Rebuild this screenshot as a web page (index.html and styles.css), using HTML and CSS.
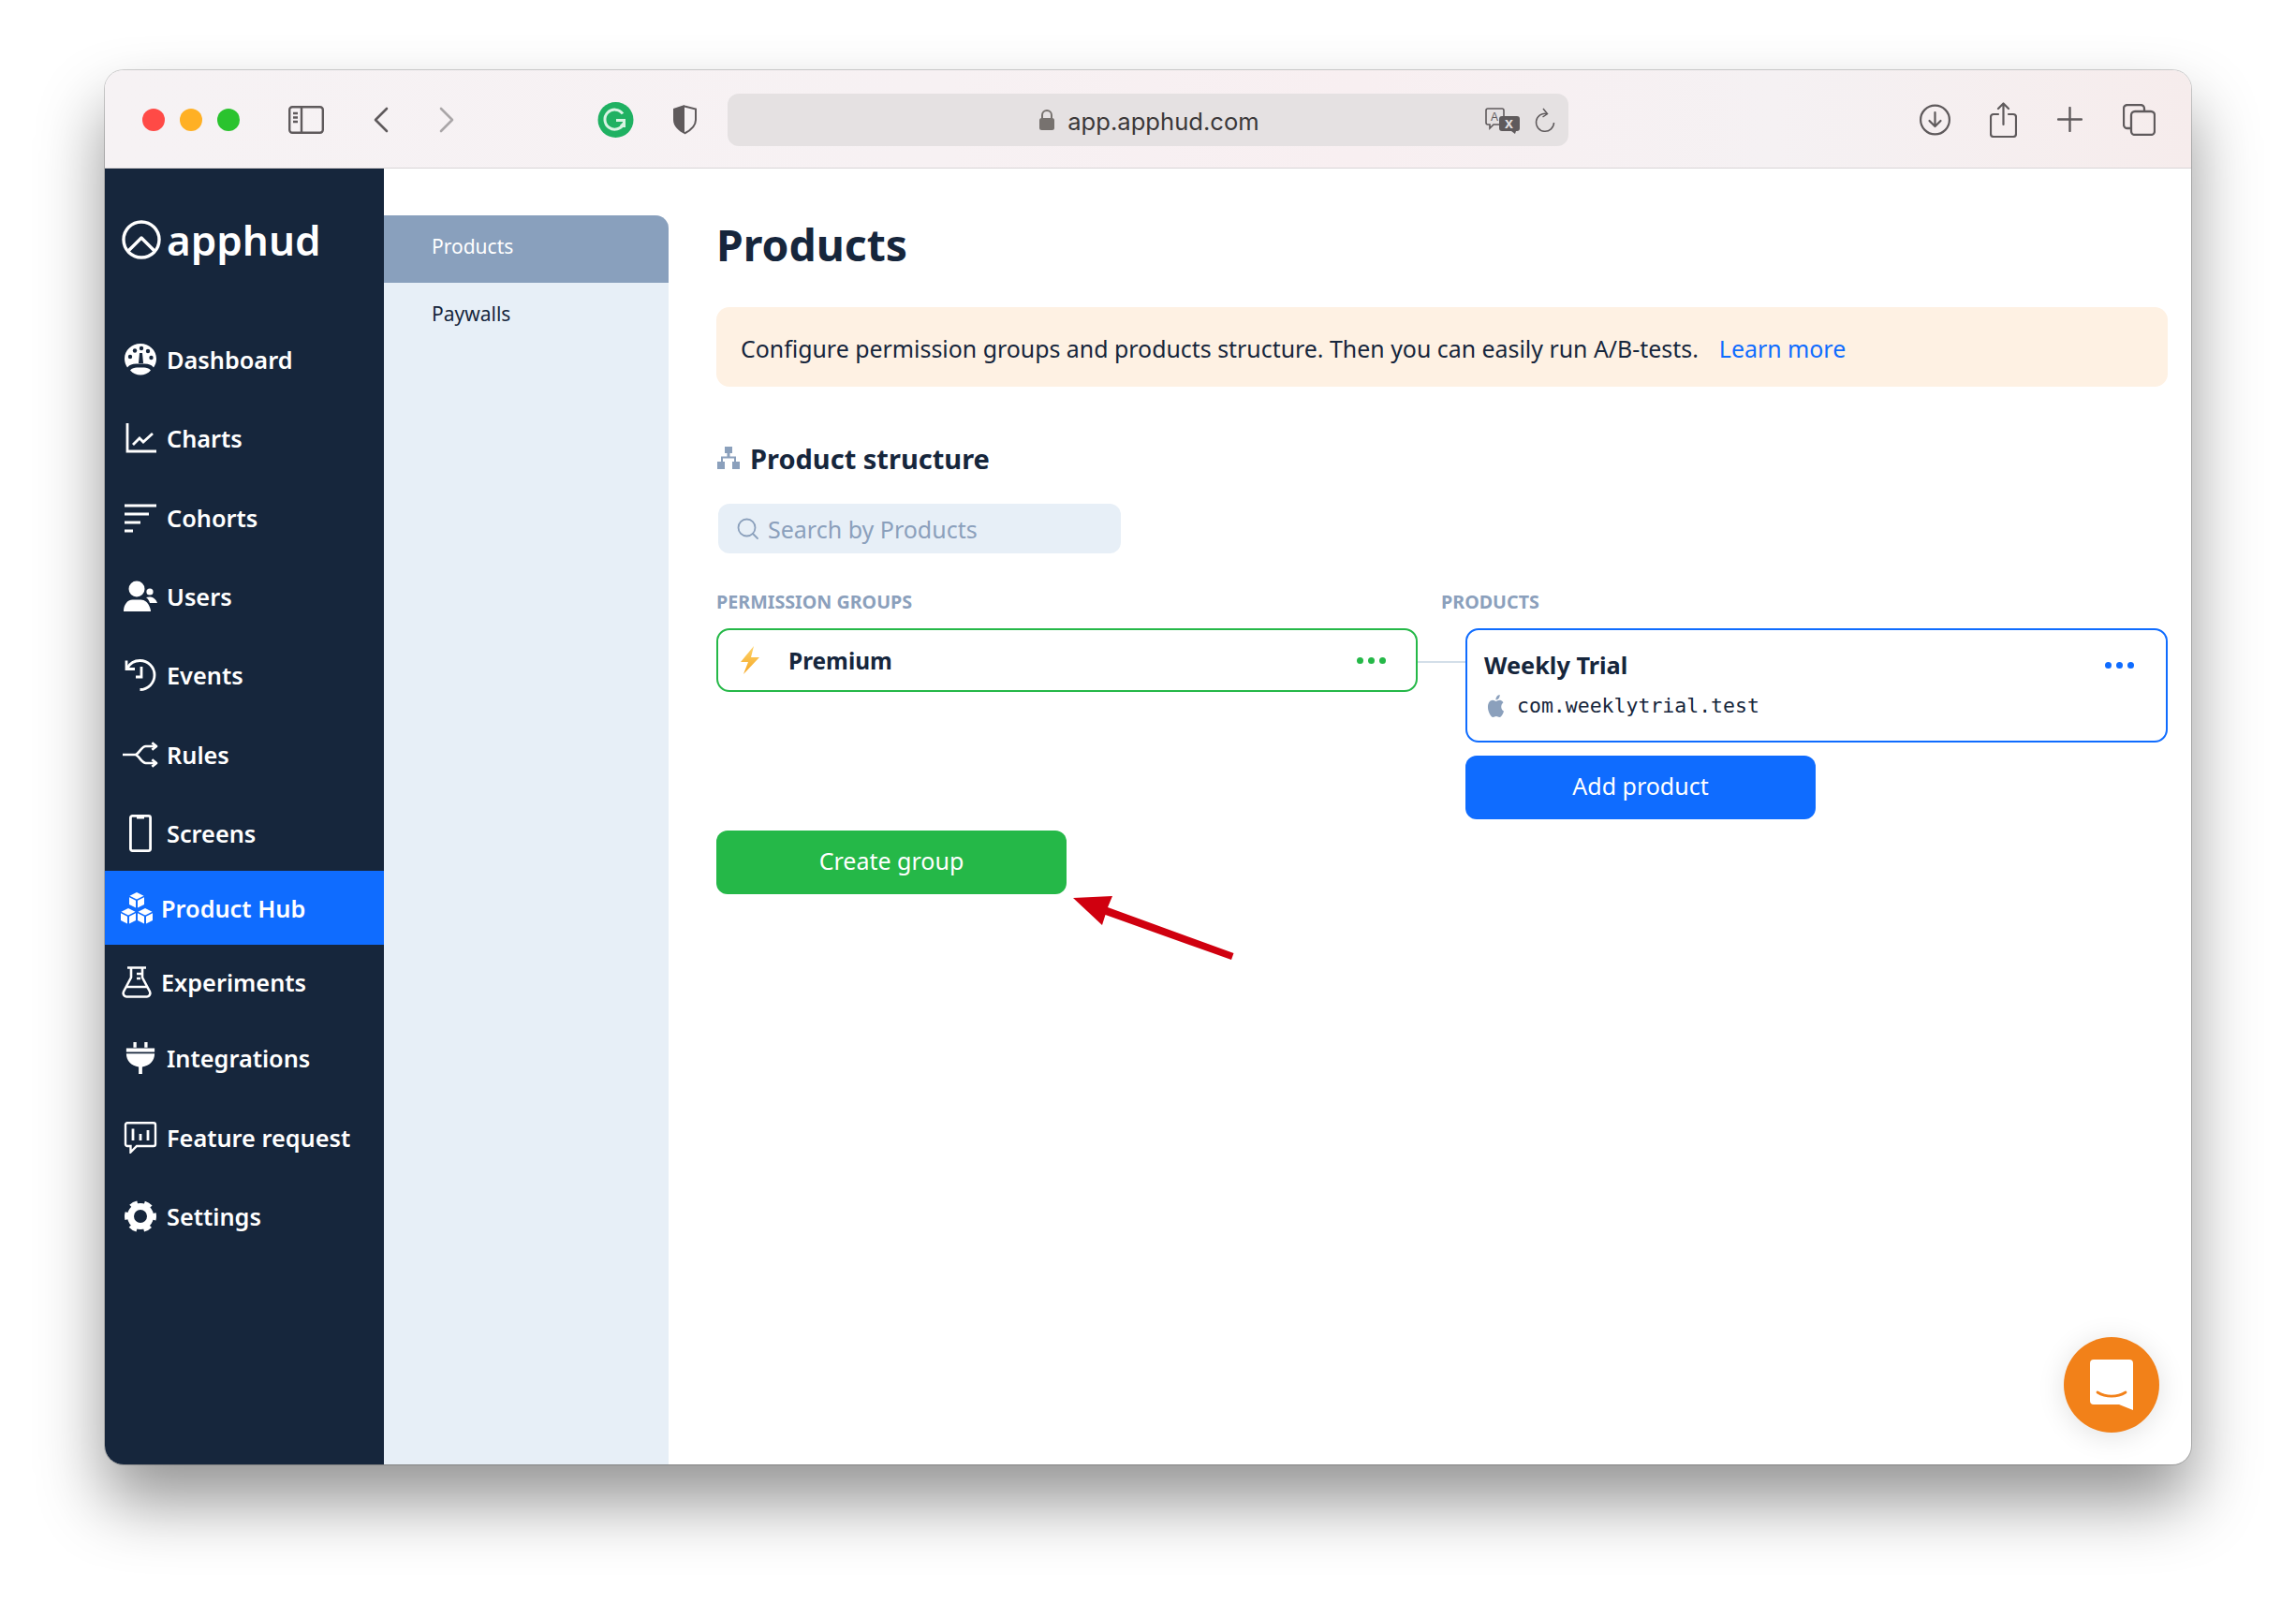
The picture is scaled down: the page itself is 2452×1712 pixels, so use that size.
FILE: index.html
```html
<!DOCTYPE html>
<html lang="en">
<head>
  <meta charset="UTF-8">
  <title>Products - Apphud</title>
  <link rel="stylesheet" href="styles.css">
</head>
<body>
  <div class="window">
    <div class="toolbar">
      <div class="lights">
        <span class="light red"></span>
        <span class="light orange"></span>
        <span class="light green"></span>
      </div>
      <svg class="tb-sidebar" width="38" height="30" viewBox="0 0 38 30" fill="none" stroke="#5f5a5c" stroke-width="2.4"><rect x="1.2" y="1.2" width="35.6" height="27.6" rx="3"/><path d="M14 1v28M5 8h5M5 12.500h5M5 17h5"/></svg>
      <svg class="tb-back" width="17" height="28" viewBox="0 0 17 28" fill="none" stroke="#5f5a5c" stroke-width="2.6" stroke-linecap="round" stroke-linejoin="round"><path d="M15 2 3 14l12 12"/></svg>
      <svg class="tb-forward" width="17" height="28" viewBox="0 0 17 28" fill="none" stroke="#aaa6a8" stroke-width="2.6" stroke-linecap="round" stroke-linejoin="round"><path d="m2 2 12 12L2 26"/></svg>
      <svg class="tb-grammarly" width="39" height="38" viewBox="0 0 39 38"><circle cx="19.500" cy="19" r="19" fill="#1fb162"/><path d="M27 12.500A10.500 10.500 0 1 0 28 23l-3 3M20 19.500h8.500V27" fill="none" stroke="#d8f3e3" stroke-width="3"/></svg>
      <svg class="tb-shield" width="28" height="33" viewBox="0 0 28 33"><path d="M14 1 2 5v12c0 7 6 12 12 15z" fill="#5f5a5c"/><path d="M14 2.500 26 5.500V17c0 6.500-6 11.500-12 14.500" fill="#f5f1f3" stroke="#5f5a5c" stroke-width="2"/></svg>
      <div class="url-bar">
        <svg width="18" height="24" viewBox="0 0 18 24"><path d="M4 11V7a5 5 0 0 1 10 0v4" fill="none" stroke="#77726f" stroke-width="2"/><rect x="1" y="10" width="16" height="13" rx="2.500" fill="#77726f"/></svg>
        <span class="url-text">app.apphud.com</span>
        <div class="url-icons">
          <svg width="37" height="28" viewBox="0 0 37 28">
            <path d="M3 1h15a2 2 0 0 1 2 2v13a2 2 0 0 1-2 2H9l-4 4v-4H3a2 2 0 0 1-2-2V3a2 2 0 0 1 2-2z" fill="none" stroke="#5f5a5c" stroke-width="1.600"/>
            <text x="6" y="14" class="tr-a">A</text>
            <path d="M18 9h16a3 3 0 0 1 3 3v10a3 3 0 0 1-3 3h-1l-1 3-4-3h-10a3 3 0 0 1-3-3V12a3 3 0 0 1 3-3z" fill="#5f5a5c"/>
            <text x="21" y="22" class="tr-x">x</text>
          </svg>
          <svg width="22" height="27" viewBox="0 0 22 27" fill="none" stroke="#5f5a5c" stroke-width="1.500"><path d="M13 6.500a9.500 9.500 0 1 0 7.500 9.500"/><path d="m9 1 4.500 5.500L8.500 10"/></svg>
        </div>
      </div>
      <svg class="tb-download" width="33" height="34" viewBox="0 0 33 34" fill="none" stroke="#5f5a5c" stroke-width="2.200" stroke-linecap="round" stroke-linejoin="round"><circle cx="16.500" cy="17" r="15.400"/><path d="M16.500 9v15M10.500 18l6 6 6-6"/></svg>
      <svg class="tb-share" width="29" height="38" viewBox="0 0 29 38" fill="none" stroke="#5f5a5c" stroke-width="2.200" stroke-linecap="round" stroke-linejoin="round"><path d="M9 13H4a3 3 0 0 0-3 3v18a3 3 0 0 0 3 3h21a3 3 0 0 0 3-3V16a3 3 0 0 0-3-3h-5M14.500 24V2M9 7l5.500-5.500L20 7"/></svg>
      <svg class="tb-plus" width="27" height="27" viewBox="0 0 27 27" fill="none" stroke="#5f5a5c" stroke-width="2.400" stroke-linecap="round"><path d="M13.500 1v25M1 13.500h25"/></svg>
      <svg class="tb-tabs" width="35" height="34" viewBox="0 0 35 34" fill="none" stroke="#5f5a5c" stroke-width="2.300"><path d="M8 26H5a4 4 0 0 1-4-4V5a4 4 0 0 1 4-4h14a4 4 0 0 1 4 4v3"/><rect x="9" y="8" width="25" height="25" rx="4"/></svg>
    </div>

    <div class="app">
      <aside class="sidebar">
        <div class="logo">
          <svg width="42" height="42" viewBox="0 0 42 42" fill="none" stroke="#fff" stroke-width="3.400" stroke-linejoin="round"><circle cx="21" cy="21" r="19"/><path d="M7 33 21 19l14 14"/></svg>
          <span class="logo-text">apphud</span>
        </div>
        <nav class="nav">
          <a class="nav-item">
            <svg class="nav-icon" viewBox="0 0 34 34">
              <path d="M17 0C7.600 0 0 7.200 0 16c0 3.400 1 6.800 3 9.400 2.500-2.800 5-3.900 9.500-3.900h9c4.500 0 7 1.100 9.500 3.900 2-2.600 3-6 3-9.400C34 7.200 26.400 0 17 0z" fill="#fff"/>
              <path d="M6 28.500c2-2.300 4.500-3 7-3h8c2.500 0 5 .7 7 3-2.800 3.200-7 5-11 5s-8.200-1.800-11-5z" fill="#fff"/>
              <g fill="#16263c"><circle cx="6" cy="14" r="2.200"/><circle cx="11" cy="7.500" r="2.200"/><circle cx="18" cy="5" r="2.200"/><circle cx="25" cy="8" r="2.200"/><circle cx="28.500" cy="15" r="2.200"/><path d="M16 10h3l1 11h-5z"/></g>
            </svg>
            <span>Dashboard</span>
          </a>
          <a class="nav-item">
            <svg class="nav-icon" viewBox="0 0 34 34" fill="none" stroke="#fff" stroke-width="2.800"><path d="M3 1v30h31"/><path d="m9 24 7-7 4 4 10-9"/></svg>
            <span>Charts</span>
          </a>
          <a class="nav-item">
            <svg class="nav-icon" viewBox="0 0 34 34" fill="none" stroke="#fff" stroke-width="3"><path d="M0 4h34M0 13h26M0 22h17M0 31h9"/></svg>
            <span>Cohorts</span>
          </a>
          <a class="nav-item">
            <svg class="nav-icon" viewBox="0 0 36 34" fill="#fff"><circle cx="14" cy="9" r="8.500"/><path d="M0 33c0-7 4-12.500 9.500-12.500h9c4 0 7.500 3 9 7 1 2 1.500 4 1.500 5.500z"/><circle cx="28" cy="12" r="3.600"/><path d="M24 18c4-1.500 10-.5 12 6h-8c-.5-2-2-4.500-4-6z"/></svg>
            <span>Users</span>
          </a>
          <a class="nav-item">
            <svg class="nav-icon" viewBox="0 0 34 34" fill="none" stroke="#fff" stroke-width="2.800"><path d="M3 9.500C6 4 11.500 1.500 16.500 1.500c8.500 0 15.500 7 15.500 15.500s-7 15.500-15.500 15.500"/><path d="M2 1.500v9h9"/><path d="M17 9v11h-6" transform="translate(1 -1)"/></svg>
            <span>Events</span>
          </a>
          <a class="nav-item">
            <svg class="nav-icon rules-icon" viewBox="0 0 40 28" fill="none" stroke="#fff" stroke-width="2.800" stroke-linejoin="round"><path d="M0 14h14c4 0 7-9.500 12-9.500h12M14 14c4 0 7 9.500 12 9.500h12"/><path d="m33 .5 5 4-5 4M33 19.500l5 4-5 4"/></svg>
            <span>Rules</span>
          </a>
          <a class="nav-item">
            <svg class="nav-icon screens-icon" viewBox="0 0 24 40" fill="none" stroke="#fff" stroke-width="2.800"><rect x="1.400" y="1.400" width="21.200" height="37.200" rx="2"/><path d="M8 3h8" stroke-width="3"/></svg>
            <span>Screens</span>
          </a>
          <a class="nav-item hub active">
            <svg class="nav-icon" viewBox="0 0 34 34" fill="#fff">
              <defs>
                <g id="cube"><path d="m8 0 7.500 3.700L8 7.400.5 3.700z"/><path d="M0 5.200v7.800l7 3.500V8.700z"/><path d="M16 5.200v7.800l-7 3.500V8.700z"/></g>
              </defs>
              <use href="#cube" x="9" y="0"/>
              <use href="#cube" x="0" y="17"/>
              <use href="#cube" x="18" y="17"/>
            </svg>
            <span>Product Hub</span>
          </a>
          <a class="nav-item lab">
            <svg class="nav-icon" viewBox="0 0 34 34" fill="none" stroke="#fff" stroke-width="2.600" stroke-linejoin="round"><path d="M7 1.500h20M11 1.500V12L3 27c-1.200 2.500.5 5.500 3 5.500h22c2.500 0 4.200-3 3-5.500L23 12V1.500"/><path d="M6 22h22M17 8h5M17 13h4"/></svg>
            <span>Experiments</span>
          </a>
          <a class="nav-item">
            <svg class="nav-icon" viewBox="0 0 34 36" fill="#fff"><path d="M9 0h3.500v6H9zM21.500 0H25v6h-3.500zM1 7h32v4H1zM1 13h32c0 8-5.500 14-14 15v8h-4v-8C6.500 27 1 21 1 13z"/></svg>
            <span>Integrations</span>
          </a>
          <a class="nav-item">
            <svg class="nav-icon" viewBox="0 0 34 34" fill="none" stroke="#fff" stroke-width="2.400"><path d="M3 1.200h28a2 2 0 0 1 2 2V24a2 2 0 0 1-2 2H13l-6.500 6.500V26H3a2 2 0 0 1-2-2V3.200a2 2 0 0 1 2-2z"/><path d="M9 7.500V20M17 13v7M25 9v11" stroke-width="2.800"/></svg>
            <span>Feature request</span>
          </a>
          <a class="nav-item">
            <svg class="nav-icon" viewBox="0 0 34 34" fill="none" stroke="#fff"><circle cx="17" cy="17" r="10.500" stroke-width="7"/><circle cx="17" cy="17" r="14" stroke-width="6" stroke-dasharray="7.500 7.160" stroke-dashoffset="3.700"/></svg>
            <span>Settings</span>
          </a>
        </nav>
      </aside>

      <div class="subnav">
        <a class="subnav-item selected">Products</a>
        <a class="subnav-item">Paywalls</a>
      </div>

      <main class="main">
        <h1 class="title">Products</h1>
        <div class="banner">
          <span>Configure permission groups and products structure. Then you can easily run A/B-tests.</span>
          <a class="link">Learn more</a>
        </div>
        <h2 class="section-title">
          <svg width="24" height="24" viewBox="0 0 24 24" fill="#8ba0bc"><path d="M8 0h8v7h-2.500v3.500H20V16h4v8h-8v-8h2v-3.500H6V16h2v8H0v-8h4v-5.500h6.500V7H8z"/></svg>
          <span>Product structure</span>
        </h2>
        <div class="search">
          <svg width="24" height="24" viewBox="0 0 24 24" fill="none" stroke="#8ba0bc" stroke-width="1.800" stroke-linecap="round"><circle cx="10.500" cy="10.500" r="9"/><path d="m17 17 5 5"/></svg>
          <span>Search by Products</span>
        </div>
        <div class="structure">
          <div class="col">
            <div class="col-label">PERMISSION GROUPS</div>
            <div class="group-box">
              <svg class="bolt" width="20" height="30" viewBox="0 0 20 30"><defs><linearGradient id="boltFill" x1="0" y1="0" x2="0" y2="1"><stop offset="0" stop-color="#fdd36b"/><stop offset="1" stop-color="#f5a623"/></linearGradient></defs><path d="M14 0 0 17h8L3 30l17-18h-9z" fill="url(#boltFill)"/></svg>
              <span class="group-name">Premium</span>
              <span class="dots green-dots"><i></i><i></i><i></i></span>
            </div>
            <button class="btn btn-green create-btn">Create group</button>
          </div>
          <div class="connector"><div class="connector-line"></div></div>
          <div class="col">
            <div class="col-label products-label">PRODUCTS</div>
            <div class="product-box">
              <div class="product-top">
                <span class="product-name">Weekly Trial</span>
                <span class="dots blue-dots"><i></i><i></i><i></i></span>
              </div>
              <div class="product-id">
                <svg width="21" height="24" viewBox="0 0 24 24" fill="#8ba0bc" preserveAspectRatio="none"><path d="M12.152 6.896c-.948 0-2.415-1.078-3.960-1.040-2.040.027-3.910 1.183-4.961 3.014-2.117 3.675-.546 9.103 1.519 12.090 1.013 1.454 2.208 3.090 3.792 3.039 1.520-.065 2.090-.987 3.935-.987 1.831 0 2.350.987 3.960.948 1.637-.026 2.676-1.480 3.676-2.948 1.156-1.688 1.636-3.325 1.662-3.415-.039-.013-3.182-1.221-3.220-4.857-.026-3.040 2.480-4.494 2.597-4.559-1.429-2.090-3.623-2.324-4.390-2.376-2-.156-3.675 1.090-4.610 1.090zM15.530 3.830c.843-1.012 1.400-2.427 1.245-3.830-1.207.052-2.662.805-3.532 1.818-.780.896-1.454 2.338-1.273 3.714 1.338.104 2.715-.688 3.559-1.701"/></svg>
                <span>com.weeklytrial.test</span>
              </div>
            </div>
            <button class="btn btn-blue add-btn">Add product</button>
          </div>
        </div>
      </main>
    </div>

    <svg class="arrow" width="190" height="85" viewBox="0 0 190 85"><path d="M6 9 48 7 43 19 177.500 68 175 75 40.500 27 37 38z" fill="#d0000f"/></svg>

    <div class="chat-bubble">
      <svg width="46" height="54" viewBox="0 0 46 54"><path d="M4 0h38a4 4 0 0 1 4 4v50l-15-6H4a4 4 0 0 1-4-4V4a4 4 0 0 1 4-4z" fill="#fff"/><path d="M8 35c9 5.500 21 5.500 30 0" fill="none" stroke="#f28119" stroke-width="2.800" stroke-linecap="round"/></svg>
    </div>
  </div>
</body>
</html>
```

FILE: styles.css
```css
html, body {
  margin: 0;
  height: 100%;
}

body {
  background-color: #fff;
  padding: 75px 112px 0;
  box-sizing: border-box;
  height: 1712px;
  overflow: hidden;
  font-family: "Noto Sans", "Lato", sans-serif;
  color: #16263c;
}

.window {
  position: relative;
  width: 2228px;
  height: 1489px;
  border-radius: 20px;
  box-shadow: 0 0 0 1px rgba(0, 0, 0, 0.18), 0 40px 70px rgba(0, 0, 0, 0.42);
  display: flex;
  flex-direction: column;
  background-color: #fff;
}

/* browser chrome */
.toolbar {
  height: 105px;
  box-sizing: border-box;
  flex-shrink: 0;
  display: flex;
  align-items: center;
  padding: 1px 0 0 40px;
  border-bottom: 1px solid #d9d5d7;
  border-radius: 20px 20px 0 0;
  background: linear-gradient(90deg, #f6f2f4 0%, #f7f1f3 40%, #f8eff1 60%, #f5f1f3 80%, #f6ecec 100%);
}

.lights {
  display: flex;
  gap: 16px;
}

.light {
  width: 24px;
  height: 24px;
  border-radius: 50%;
}

.light.red { background-color: #ff4a46; }
.light.orange { background-color: #ffb024; }
.light.green { background-color: #2ac32e; }

.tb-sidebar { margin-left: 52px; }
.tb-back { margin-left: 52px; }
.tb-forward { margin-left: 54px; }
.tb-grammarly { margin-left: 152px; }
.tb-shield { margin-left: 40px; }
.tb-download { margin-left: 375px; }
.tb-share { margin-left: 42px; }
.tb-plus { margin-left: 43px; }
.tb-tabs { margin-left: 43px; }

.url-bar {
  position: relative;
  width: 898px;
  height: 56px;
  margin-left: 32px;
  padding-left: 2px;
  box-sizing: border-box;
  border-radius: 12px;
  background-color: #e5e1e2;
  display: flex;
  align-items: center;
  justify-content: center;
  gap: 13px;
}

.url-text {
  font-family: "Inter", "Liberation Sans", sans-serif;
  font-size: 25.600px;
  padding-top: 3px;
  color: #3b3839;
}

.url-icons {
  position: absolute;
  right: 14px;
  top: 15px;
  display: flex;
  gap: 16px;
}

.tr-a {
  font-family: "Liberation Sans", sans-serif;
  font-size: 12px;
  fill: #5f5a5c;
}

.tr-x {
  font-family: "Liberation Sans", sans-serif;
  font-size: 16px;
  font-weight: bold;
  fill: #e5e1e2;
}

/* app */
.app {
  flex: 1;
  display: flex;
  min-height: 0;
}

.sidebar {
  width: 298px;
  flex-shrink: 0;
  background-color: #16263c;
  border-radius: 0 0 0 20px;
}

.logo {
  display: flex;
  align-items: center;
  gap: 7px;
  padding: 55px 0 0 18px;
  height: 97px;
  box-sizing: border-box;
}

.logo-text {
  margin-left: -1px;
  font-size: 44px;
  font-weight: 600;
  line-height: 42px;
  color: #fff;
}

.nav {
  display: flex;
  flex-direction: column;
  padding-top: 65px;
}

.nav-item {
  height: 84.300px;
  flex-shrink: 0;
  display: flex;
  align-items: center;
  gap: 9px;
  padding-left: 19px;
  color: #fff;
  font-size: 25.300px;
  font-weight: 600;
}

.nav-icon {
  width: 38px;
  height: 34px;
  flex-shrink: 0;
}

.rules-icon { height: 28px; }
.screens-icon { height: 40px; }

.nav-item.hub {
  height: 79px;
  margin-top: -2px;
  padding-left: 15px;
  background-color: #0f6cff;
  gap: 7px;
}

.nav-item.lab {
  height: 79px;
  padding-left: 15px;
  gap: 7px;
}

.subnav {
  width: 304px;
  flex-shrink: 0;
  margin-top: 50px;
  background-color: #e7eff7;
  border-radius: 0 14px 0 0;
  overflow: hidden;
}

.subnav-item {
  height: 72px;
  box-sizing: border-box;
  padding: 0 0 7px 51px;
  display: flex;
  align-items: center;
  font-size: 21px;
  color: #16263c;
}

.subnav-item.selected {
  background-color: #89a0bd;
  color: #fff;
}

.main {
  flex: 1;
  padding: 54px 25px 0 51px;
  min-width: 0;
}

.title {
  margin: 0 0 38px;
  height: 56px;
  line-height: 56px;
  font-size: 46.300px;
  font-weight: 700;
}

.banner {
  height: 85px;
  padding: 2px 0 0 26px;
  box-sizing: border-box;
  border-radius: 14px;
  background-color: #fef1e3;
  display: flex;
  align-items: center;
  gap: 22px;
  font-size: 24.900px;
}

.link {
  color: #0f6cff;
}

.section-title {
  margin: 56px 0 0 1px;
  height: 40px;
  display: flex;
  align-items: center;
  gap: 11px;
  font-size: 29px;
  font-weight: 700;
}

.search {
  margin: 29px 0 0 2px;
  width: 430px;
  height: 53px;
  padding-left: 20px;
  box-sizing: border-box;
  border-radius: 12px;
  background-color: #e7eff7;
  display: flex;
  align-items: center;
  gap: 9px;
  font-size: 25px;
  color: #8ba0bc;
}

.structure {
  margin-top: 38px;
  display: grid;
  grid-template-columns: 749px 51px 750px;
}

.col-label {
  height: 28px;
  line-height: 28px;
  margin-bottom: 14px;
  font-size: 19.700px;
  font-weight: 700;
  color: #8ba0bc;
}

.products-label {
  margin-left: -26px;
}

.group-box {
  height: 68px;
  box-sizing: border-box;
  border: 2px solid #25b848;
  border-radius: 14px;
  display: flex;
  align-items: center;
  padding: 0 32px 0 24px;
}

.group-name {
  margin-left: 31px;
  font-size: 24.400px;
  font-weight: 700;
}

.dots {
  margin-left: auto;
  display: flex;
  gap: 5px;
}

.dots i {
  width: 7px;
  height: 7px;
  border-radius: 50%;
}

.green-dots i { background-color: #25b848; }
.blue-dots i { background-color: #0f6cff; }

.connector {
  padding-top: 77px;
}

.connector-line {
  height: 2px;
  background-color: #d3dee9;
}

.product-box {
  height: 122px;
  box-sizing: border-box;
  border: 2px solid #0f6cff;
  border-radius: 14px;
  padding: 0 34px 0 18px;
}

.product-top {
  display: flex;
  align-items: center;
  height: 34px;
  margin-top: 20px;
}

.product-name {
  font-size: 25.300px;
  font-weight: 700;
}

.product-id {
  display: flex;
  align-items: center;
  gap: 12px;
  margin: 14px 0 0 2px;
  font-family: "DejaVu Sans Mono", "Liberation Mono", monospace;
  font-size: 21.500px;
}

.btn {
  display: block;
  height: 68px;
  width: 374px;
  padding: 0 0 5px;
  border: none;
  border-radius: 12px;
  font-family: inherit;
  font-size: 25px;
  color: #fff;
}

.btn-green {
  background-color: #25b848;
}

.btn-blue {
  background-color: #0f6cff;
}

.create-btn {
  margin-top: 148px;
}

.add-btn {
  margin-top: 14px;
}

/* overlays */
.arrow {
  position: absolute;
  left: 1028px;
  top: 875px;
}

.chat-bubble {
  position: absolute;
  right: 34px;
  bottom: 34px;
  width: 102px;
  height: 102px;
  border-radius: 50%;
  background-color: #f28119;
  box-shadow: 0 4px 30px rgba(0, 0, 0, 0.12);
  display: flex;
  align-items: center;
  justify-content: center;
}
```
